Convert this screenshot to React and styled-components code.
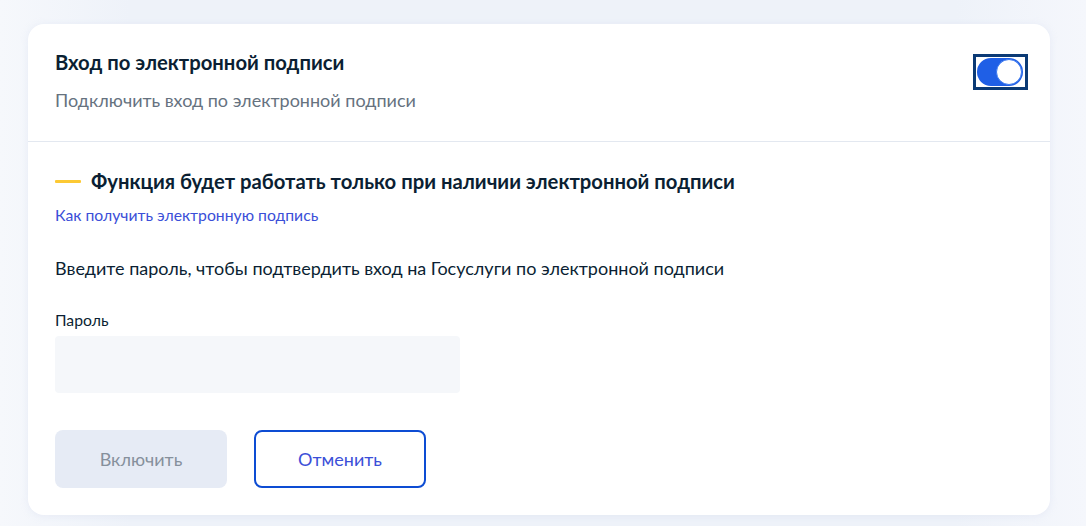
import React, { useState } from "react";
import styled, { createGlobalStyle } from "styled-components";

const Global = createGlobalStyle`
  html, body {
    margin: 0;
    padding: 0;
  }
  body {
    font-family: Lato, "Noto Sans", sans-serif;
    background: linear-gradient(90deg, #f6f8fc 0%, #eef2f9 12%, #eef2f9 88%, #f5f7fc 100%);
    color: #0b1f33;
  }
`;

const Page = styled.div`
  padding: 24px 36px 11px 28px;
  min-height: 526px;
  box-sizing: border-box;
`;

const Card = styled.div`
  background: #fff;
  border-radius: 16px;
  box-shadow: 0 1px 8px rgba(176, 190, 220, 0.18);
`;

const Header = styled.div`
  display: flex;
  justify-content: space-between;
  align-items: flex-start;
  padding: 26px 22px 29px 27px;
  border-bottom: 1px solid #e3e8f0;
`;

const Title = styled.div`
  font-size: 20.25px;
  line-height: 24px;
  font-weight: 700;
  color: #0b1f33;
`;

const Sub = styled.div`
  margin-top: 14px;
  font-size: 18px;
  line-height: 24px;
  color: #66727f;
`;

const Focus = styled.div`
  margin-top: 4px;
  padding: 1px 2px 1px 1px;
  border: 3px solid #0b3a75;
  display: flex;
`;

const Track = styled.button`
  width: 46px;
  height: 28px;
  border-radius: 14px;
  border: none;
  padding: 1px;
  background: #1f5fe6;
  display: flex;
  justify-content: ${(p) => (p.on ? "flex-end" : "flex-start")};
  cursor: pointer;
`;

const Knob = styled.span`
  width: 24px;
  height: 24px;
  border-radius: 50%;
  background: #fff;
  border: 1px solid #3a78f0;
`;

const Body = styled.div`
  padding: 27px 27px 27px;
`;

const Notice = styled.div`
  display: flex;
  align-items: center;
  gap: 10px;
  font-size: 20.25px;
  line-height: 24px;
  font-weight: 700;
`;

const Dash = styled.span`
  width: 26px;
  height: 3px;
  margin-top: 1px;
  background: #fcc934;
  border-radius: 1px;
`;

const Link = styled.a`
  display: block;
  margin-top: 12px;
  font-size: 15.75px;
  line-height: 20px;
  color: #3b4fd8;
  text-decoration: none;
`;

const Text = styled.p`
  margin: 31px 0 0;
  font-size: 18px;
  line-height: 24px;
`;

const Label = styled.label`
  display: block;
  margin-top: 30px;
  font-size: 15.75px;
  line-height: 20px;
`;

const Input = styled.input`
  display: block;
  margin-top: 6px;
  width: 405px;
  height: 57px;
  box-sizing: border-box;
  border: none;
  border-radius: 4px;
  background: #f5f7fa;
  outline: none;
  padding: 0 16px;
  font: inherit;
`;

const Actions = styled.div`
  display: flex;
  gap: 27px;
  margin-top: 37px;
`;

const Btn = styled.button`
  width: 172px;
  height: 58px;
  box-sizing: border-box;
  border-radius: 8px;
  font-family: Lato, "Noto Sans", sans-serif;
  font-size: 18px;
  border: ${(p) => (p.outline ? "2px solid #0d4cd3" : "none")};
  background: ${(p) => (p.outline ? "#fff" : "#e6ebf5")};
  color: ${(p) => (p.outline ? "#3b4fd8" : "#86909c")};
`;

export default function App() {
  const [on, setOn] = useState(true);
  return (
    <>
      <Global />
      <Page>
        <Card>
          <Header>
            <div>
              <Title>Вход по электронной подписи</Title>
              <Sub>Подключить вход по электронной подписи</Sub>
            </div>
            <Focus>
              <Track on={on ? 1 : 0} onClick={() => setOn(!on)}>
                <Knob />
              </Track>
            </Focus>
          </Header>
          <Body>
            <Notice>
              <Dash />
              Функция будет работать только при наличии электронной подписи
            </Notice>
            <Link href="#">Как получить электронную подпись</Link>
            <Text>Введите пароль, чтобы подтвердить вход на Госуслуги по электронной подписи</Text>
            <Label>Пароль</Label>
            <Input type="password" />
            <Actions>
              <Btn disabled>Включить</Btn>
              <Btn outline={1}>Отменить</Btn>
            </Actions>
          </Body>
        </Card>
      </Page>
    </>
  );
}
